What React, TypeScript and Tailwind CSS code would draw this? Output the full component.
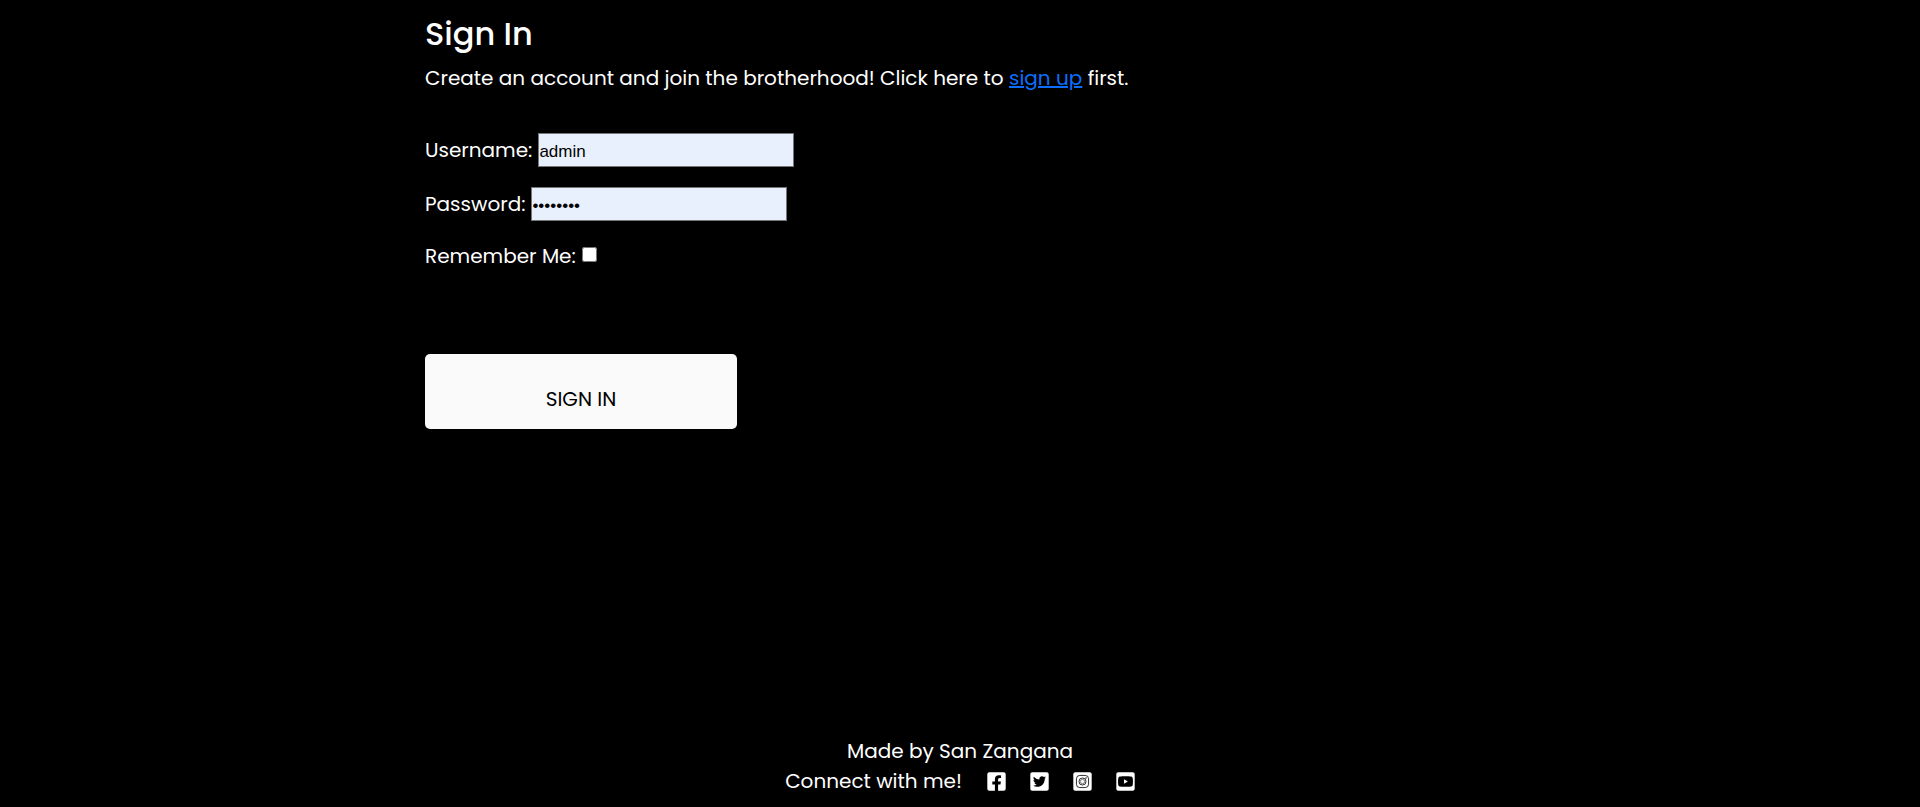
import type { ComponentType } from 'react';
import { FaFacebookSquare, FaTwitterSquare, FaYoutubeSquare } from 'react-icons/fa';

function InstagramSquare({ className }: { className?: string }) {
  return (
    <svg viewBox="0 0 448 512" className={className} aria-hidden="true">
      <rect y="32" width="448" height="448" rx="48" fill="currentColor" />
      <g fill="none" stroke="#000" strokeWidth="20">
        <rect x="76" y="108" width="296" height="296" rx="82" />
        <circle cx="224" cy="256" r="86" />
        <circle cx="224" cy="256" r="52" strokeWidth="12" />
      </g>
      <circle cx="310" cy="171" r="18" />
    </svg>
  );
}

const socials: { name: string; Icon: ComponentType<{ className?: string }> }[] = [
  { name: 'Facebook', Icon: FaFacebookSquare },
  { name: 'Twitter', Icon: FaTwitterSquare },
  { name: 'Instagram', Icon: InstagramSquare },
  { name: 'YouTube', Icon: FaYoutubeSquare },
];

const fieldClass =
  "h-[34px] w-64 border border-[#767676] bg-[#e8f0fe] pt-[3px] font-['Liberation_Sans',Arial,sans-serif] text-[17px] text-black";

export default function App() {
  return (
    <div className="flex min-h-screen flex-col bg-black px-4 font-['Poppins','Inter',sans-serif] text-[20px] leading-[30px] text-white">
      <main className="mx-auto w-full max-w-[1070px] pt-3.5">
        <h1 className="text-[32px] font-medium leading-[40px]">Sign In</h1>
        <p className="mt-[9px]">
          Create an account and join the brotherhood! Click here to{' '}
          <a href="#signup" className="text-[#0d6efd] underline">
            sign up
          </a>{' '}
          first.
        </p>

        <form className="mt-10" onSubmit={(e) => e.preventDefault()}>
          <div className="flex items-center gap-1.5">
            <label htmlFor="username">Username:</label>
            <input id="username" type="text" defaultValue="admin" className={fieldClass} />
          </div>
          <div className="mt-5 flex items-center gap-1.5">
            <label htmlFor="password">Password:</label>
            <input id="password" type="password" defaultValue="password" className={fieldClass} />
          </div>
          <div className="mt-5 flex items-center gap-1.5">
            <label htmlFor="remember">Remember Me:</label>
            <input id="remember" type="checkbox" className="mb-[3px] size-[15px]" />
          </div>
          <button
            type="submit"
            className="mt-[83px] h-[75px] w-[312px] rounded-[5px] bg-[#fafafa] pt-3.5 text-black"
          >
            SIGN IN
          </button>
        </form>
      </main>

      <footer className="mt-auto flex flex-col items-center pb-[11px]">
        <p>Made by San Zangana</p>
        <div className="flex items-center gap-[25px]">
          <p>Connect with me!</p>
          <div className="flex items-center gap-6">
            {socials.map(({ name, Icon }) => (
              <a key={name} href={`#${name.toLowerCase()}`} aria-label={name}>
                <Icon className="h-[21px] w-[19px]" />
              </a>
            ))}
          </div>
        </div>
      </footer>
    </div>
  );
}
